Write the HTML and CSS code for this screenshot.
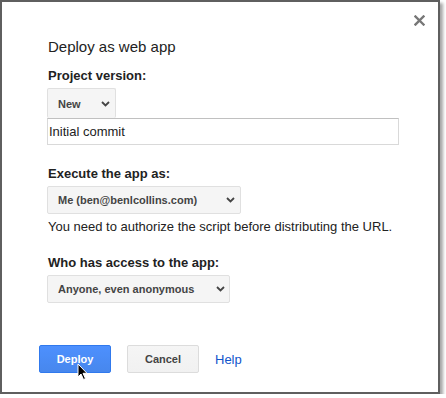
FILE: index.html
```html
<!DOCTYPE html>
<html lang="en">
<head>
    <meta charset="UTF-8">
    <meta name="viewport" content="width=device-width, initial-scale=1.0">
    <title>Deploy as web app</title>
    <link rel="stylesheet" href="styles.css">
</head>
<body>

    <!-- Hộp thoại deploy -->
    <div class="dialog">
        <span class="close-btn">
            <svg width="11" height="11" viewBox="0 0 11 11">
                <path d="M1.5 1.5 L9.5 9.5 M9.5 1.5 L1.5 9.5" stroke="#777" stroke-width="2.4" stroke-linecap="square"/>
            </svg>
        </span>

        <h1 class="title">Deploy as web app</h1>

        <label class="field-label first">Project version:</label>
        <div class="select select-new">
            <span>New</span>
            <svg class="chevron" width="9" height="6" viewBox="0 0 9 6"><path d="M1 1 L4.5 4.5 L8 1" fill="none" stroke="#444" stroke-width="1.8"/></svg>
        </div>
        <input class="text-input" type="text" value="Initial commit">

        <label class="field-label">Execute the app as:</label>
        <div class="select select-me">
            <span>Me (ben@benlcollins.com)</span>
            <svg class="chevron" width="9" height="6" viewBox="0 0 9 6"><path d="M1 1 L4.5 4.5 L8 1" fill="none" stroke="#444" stroke-width="1.8"/></svg>
        </div>
        <p class="note">You need to authorize the script before distributing the URL.</p>

        <label class="field-label">Who has access to the app:</label>
        <div class="select select-access">
            <span>Anyone, even anonymous</span>
            <svg class="chevron" width="9" height="6" viewBox="0 0 9 6"><path d="M1 1 L4.5 4.5 L8 1" fill="none" stroke="#444" stroke-width="1.8"/></svg>
        </div>

        <!-- Các nút -->
        <div class="buttons">
            <button class="btn btn-primary">Deploy</button>
            <button class="btn btn-default">Cancel</button>
            <a class="help-link" href="#">Help</a>
        </div>

        <!-- Con trỏ chuột -->
        <svg class="cursor" width="12" height="18" viewBox="0 0 12 18">
            <path d="M1 1 L1 14 L4 11 L6.5 16.5 L8.5 15.6 L6 10.3 L10 10.3 Z" fill="#000" stroke="#fff" stroke-width="1"/>
        </svg>
    </div>

</body>
</html>
```

FILE: styles.css
```css
body {
    font-family: "Liberation Sans", Arial, sans-serif;
    margin: 0;
    padding: 0;
    background-color: #fff;
}

/* Khung hộp thoại */
.dialog {
    position: relative;
    width: 440px;
    height: 394px;
    box-sizing: border-box;
    border: 2px solid #5f5f5f;
    box-shadow: 3px 3px 3px rgba(0, 0, 0, 0.35);
    background-color: #fff;
    padding: 36px 0 0 45px;
    display: flex;
    flex-direction: column;
    align-items: flex-start;
}

.close-btn {
    position: absolute;
    top: 13px;
    right: 13px;
    line-height: 0;
}

.title {
    font-size: 15px;
    font-weight: normal;
    line-height: 18px;
    margin: 0 0 12px 1px;
    color: #222;
}

.field-label {
    font-size: 13px;
    font-weight: bold;
    line-height: 16px;
    margin: 0 0 4px 1px;
    color: #222;
}

/* Ô chọn */
.select {
    display: flex;
    align-items: center;
    justify-content: space-between;
    height: 28px;
    box-sizing: border-box;
    padding: 0 5px 0 10px;
    background-color: #f5f5f5;
    border: 1px solid #e0e0e0;
    border-radius: 2px;
    font-size: 11px;
    font-weight: bold;
    color: #444;
}

.select-new {
    width: 69px;
    height: 30px;
    border-bottom: none;
}

.select-me {
    width: 194px;
}

.select-access {
    width: 183px;
    padding-right: 4px;
}

.chevron {
    display: block;
}

.text-input {
    width: 352px;
    height: 27px;
    box-sizing: border-box;
    margin: 0 0 21px 0;
    padding: 0 1px;
    border: 1px solid #d9d9d9;
    border-top-color: #c0c0c0;
    font-family: "Liberation Sans", Arial, sans-serif;
    font-size: 13px;
    color: #222;
    outline: none;
}

.note {
    font-size: 13px;
    line-height: 17px;
    margin: 4px 0 20px 1px;
    color: #222;
}

/* Các nút */
.buttons {
    display: flex;
    align-items: center;
    gap: 16px;
    margin: 42px 0 0 -8px;
}

.btn {
    width: 72px;
    height: 28px;
    border-radius: 2px;
    font-family: "Liberation Sans", Arial, sans-serif;
    font-size: 11px;
    font-weight: bold;
    cursor: pointer;
}

.btn-primary {
    background: linear-gradient(#4d90fe, #4787ed);
    border: 1px solid #3079ed;
    color: #fff;
}

.btn-default {
    background: linear-gradient(#f5f5f5, #f1f1f1);
    border: 1px solid #dcdcdc;
    color: #444;
}

.help-link {
    font-size: 13px;
    color: #15c;
    text-decoration: none;
}

.cursor {
    position: absolute;
    left: 75px;
    top: 361px;
}
```
